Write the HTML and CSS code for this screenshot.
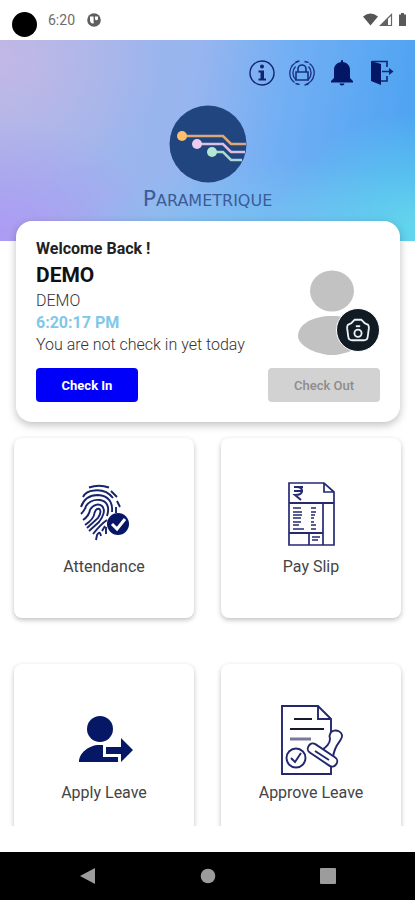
FILE: index.html
```html
<!DOCTYPE html>
<html lang="en">
<head>
<meta charset="utf-8">
<meta name="viewport" content="width=device-width, initial-scale=1">
<title>Parametrique</title>
<link rel="stylesheet" href="styles.css">
</head>
<body>
<div class="status">
  <span class="camera-hole"></span>
  <span class="clock">6:20</span>
  <svg class="status-app" width="14" height="14" viewBox="0 0 14 14"><circle cx="7" cy="7" r="6.8" fill="#5e5e5e"/><path d="M3 3.6h3.6v6.8H5.2A3 3 0 0 1 3 8z" fill="#fff"/><path d="M8 3.4h3v2.3a1.5 1.5 0 0 1-3 0z" fill="#fff"/></svg>
  <svg class="status-icons" width="46" height="14" viewBox="0 0 46 14"><path d="M2 3.500Q9.500-2.500 17 3.500L9.500 12.500Z" fill="#565656"/><path d="M19.500 12.500 30.500 1.500V12.500Z" fill="none" stroke="#666" stroke-width="1.200"/><path d="M19 13 27 5V13Z" fill="#626262"/><path d="M38 1.500h2V0h3v1.500h2V13h-7z" fill="#5a5a5a"/></svg>
</div>
<main class="content">
  <header class="hero">
    <nav class="tools" aria-label="Account">
      <button class="tool" aria-label="Information"><svg viewBox="0 0 26 26"><circle cx="13" cy="13" r="12" fill="none" stroke="#10246f" stroke-width="1.400"/><circle cx="13" cy="6.500" r="2" fill="#10246f"/><path d="M9.500 10.500h5.500v8h2v2h-7.500v-2h2v-6h-2z" fill="#10246f"/></svg></button>
      <button class="tool" aria-label="Change password"><svg viewBox="0 0 26 26" fill="none" stroke="#17317f" stroke-width="1.300"><path d="M9.500 1.500A12 12 0 0 0 5.500 22.500M10.500 24.500l-4-1M6.500 2l4-1M16.500 24.500A12 12 0 0 0 20.500 3.500M15.500 1.500l4 1M19.500 24l-4 1M6.500 6.500A9.500 9.500 0 0 0 7 20M19 20A9.500 9.500 0 0 0 19.500 6.500"/><path d="M7 12h12v8H7zM9 12V9a4 4 0 0 1 8 0v3" stroke-width="1.600"/></svg></button>
      <button class="tool" aria-label="Notifications"><svg viewBox="0 0 26 26" fill="#041767"><path d="M12 1a1 1 0 0 1 2 0v1c5 1 7 4 7 8v8l3 3v1.500H2V21l3-3v-8c0-4 2-7 7-8zM10.500 23.500h5a2.500 2 0 0 1-5 0z"/></svg></button>
      <button class="tool" aria-label="Log out"><svg viewBox="0 0 26 26"><path d="M2 1l10 3v21l-10-4z" fill="#041767"/><path d="M3 1.500h15V7M12 21h6v-5M13 11.500h10" fill="none" stroke="#10246f" stroke-width="1.600"/><path d="M20 8l4.500 3.500L20 15z" fill="#10246f"/></svg></button>
    </nav>
    <div class="brand">
      <svg class="brand-mark" viewBox="0 0 78 78"><circle cx="39" cy="39" r="38.500" fill="#20457f"/><g fill="none" stroke-width="2.500"><path d="M13 31H54l8 8h15" stroke="#dca77b"/><path d="M28 39H54l8 8h14" stroke="#d8bfe4"/><path d="M43 47H54l8 8h11" stroke="#add7d3"/></g><circle cx="13" cy="31" r="5" fill="#fac06d"/><circle cx="28" cy="39" r="5" fill="#ecccee"/><circle cx="43" cy="47" r="5" fill="#b5e6d3"/></svg>
      <h1 class="brand-name">P<span class="brand-rest">ARAMETRIQUE</span></h1>
    </div>
  </header>
  <section class="welcome">
    <div class="profile">
      <div class="greeting">
        <p class="hello">Welcome Back !</p>
        <h2 class="name">DEMO</h2>
        <p class="line">DEMO</p>
        <p class="line time">6:20:17 PM</p>
        <p class="line">You are not check in yet today</p>
      </div>
      <div class="avatar">
        <svg class="person" viewBox="0 0 68 86" fill="#c2c2c2"><ellipse cx="34" cy="21" rx="22" ry="20.500"/><path d="M0 66C0 54 15 46 34 46s34 8 34 20c0 11-21 19-34 19S0 77 0 66z"/></svg>
        <button class="photo" aria-label="Change photo"><svg viewBox="0 0 24 24" fill="none" stroke="#eef2f3" stroke-width="1.700"><path d="M2.500 7.500C3.500 6 5.500 6.500 6.500 5L9 2.500h6L17.500 5c1 1.500 3 1 4 2.500q.6 1 .5 3L21 18q-.3 3.500-3.500 3.500h-11Q3.300 21.500 3 18L2 10.500Q1.900 8.500 2.500 7.500z"/><circle cx="12" cy="15" r="3.300"/><path d="M10 8.500h4" /></svg></button>
      </div>
    </div>
    <div class="actions">
      <button class="check check-in">Check In</button>
      <button class="check check-out" disabled>Check Out</button>
    </div>
  </section>
  <div class="tiles">
    <a class="tile" href="#attendance">
      <svg class="tile-icon" viewBox="0 0 70 70" fill="none" stroke="#17236b" stroke-width="1.900">
        <path d="M20 8.500Q30 5 40 8.500M14 18Q17 12 25 11.500 37 10 44 19M42 12l6 6M48 22l3 6"/>
        <path d="M12 28C15 19 22 16 29 16 39 16.500 44 23 43 33"/>
        <path d="M12 35Q16 31 17 27C21 21 27 20.500 31 21 38 22 41 28 38 37M47 28v6"/>
        <path d="M14 41Q20 37 21 31C24 25 30 24.500 33 27 37 31 34 38 30 43L20 52"/>
        <path d="M16 46Q25 40 25.500 34 27 29 30.500 30 33 33 29 39L18 49"/>
        <path d="M38 41Q32 45 24 55M27 61l1-5q3-5 4 1M33 52l3-5M37 48v7"/>
        <circle cx="49" cy="45" r="11" fill="#071765" stroke="none"/><path d="M43 45l5 5 8-10" stroke="#fff" stroke-width="3"/>
      </svg>
      <span>Attendance</span>
    </a>
    <a class="tile" href="#payslip">
      <svg class="tile-icon" viewBox="0 0 70 70" fill="none" stroke="#252a71" stroke-width="1.700">
        <path d="M13 4H48l10 9V66H13zM48 4v9h10M13 24h45M47 24v42M13 54h34M33 54v12"/>
        <path d="M13 24h45M13 54h34" stroke-width="2.200"/>
        <path d="M18 8h9M18 12h9M21 8q5 0 5 4t-7 4l6 5" stroke-width="2"/>
        <path d="M17 29h8M17 33h9M17 36h9M17 39h8M17 43h8M17 46h6M17 50h11M35 29h5M35 33h5M35 36h4M35 39h3M35 43h3M35 46h5M35 50h5M36 58h8M36 61h6" stroke-width="1.700"/>
      </svg>
      <span>Pay Slip</span>
    </a>
    <a class="tile" href="#apply">
      <svg class="tile-icon" viewBox="0 0 70 70" fill="#061765"><circle cx="31" cy="24" r="13"/><path d="M10 57C10 48 20 40 30 40h4v12h15v5zM37 42h15v-9l12 12-12 12v-8H37z"/></svg>
      <span>Apply Leave</span>
    </a>
    <a class="tile" href="#approve">
      <svg class="tile-icon" viewBox="0 0 70 70" fill="none" stroke="#23276d" stroke-width="1.900">
        <path d="M55 27V14L42 1H6V69H55V62M42 1v13h13"/><path d="M18 14h18M14 24h34" stroke="#17192e"/><path d="M14 34h21" stroke="#77799c" stroke-width="3"/>
        <circle cx="20" cy="53" r="9.500"/><path d="M15 53l4 4 6-9"/>
        <path d="M45 46C50 42 54 39 54 34 51 24 64 23 66 30 67 36 59 37 57 52" fill="#fff"/>
        <rect x="30" y="45" width="33" height="10" rx="4.500" transform="rotate(34 46.500 50)" fill="#fff"/><path d="M39 46l14 9"/>
      </svg>
      <span>Approve Leave</span>
    </a>
  </div>
</main>
<nav class="system-nav" aria-label="System">
  <button class="system-key" aria-label="Back"><svg viewBox="0 0 18 18"><path d="M1 9 16 1V17z"/></svg></button>
  <button class="system-key" aria-label="Home"><svg viewBox="0 0 18 18"><circle cx="9" cy="9" r="7.300"/></svg></button>
  <button class="system-key" aria-label="Recent apps"><svg viewBox="0 0 18 18"><rect x="1" y="1" width="16" height="16" rx="1"/></svg></button>
</nav>
</body>
</html>
```
FILE: styles.css
```css
* { box-sizing: border-box; }
body {
  margin: 0;
  height: 100vh;
  display: flex;
  flex-direction: column;
  background: #fff;
  color: #333;
  font-family: Roboto, "Liberation Sans", sans-serif;
}
h1, h2, p { margin: 0; }
button { padding: 0; border: 0; background: none; font: inherit; }
svg { display: block; }

.status {
  flex: none;
  height: 40px;
  display: flex;
  align-items: center;
  padding: 0 8px 0 12px;
}
.camera-hole {
  width: 25px;
  height: 25px;
  margin: 8px 11px 0 0;
  border-radius: 50%;
  background: #000;
}
.clock { font-size: 14px; color: #6c6c6c; margin-right: 12px; }
.status-icons { margin-left: auto; }

.content {
  flex: 1;
  min-height: 0;
  overflow: hidden;
  margin-bottom: 26px;
}
.hero {
  height: 201px;
  padding: 20px 20px 0;
  background:
    radial-gradient(ellipse 150px 120px at 102% 95%, #63d9ec, rgba(99, 217, 236, 0) 100%),
    radial-gradient(ellipse 210px 90px at 65% 105%, #78c5f1, rgba(120, 197, 241, 0) 100%),
    radial-gradient(ellipse 160px 110px at 0% 95%, #ad9bf3, rgba(173, 155, 243, 0) 100%),
    radial-gradient(ellipse 160px 140px at 0% 10%, #c2b8e5, rgba(194, 184, 229, 0) 100%),
    linear-gradient(100deg, #a7b5ea 0%, #97b5ef 45%, #72aff4 65%, #48a1f2 100%);
}
.tools { display: flex; justify-content: flex-end; gap: 14px; }
.tool { width: 26px; height: 26px; }
.brand { display: flex; flex-direction: column; align-items: center; margin-top: 19px; }
.brand-mark { width: 78px; height: 78px; }
.brand-name {
  margin-top: 4px;
  font: 400 22px/24px "DejaVu Sans", sans-serif;
  color: #3c5c97;
}
.brand-rest { font-size: 16px; }

.welcome {
  position: relative;
  margin: -20px 15px 0 16px;
  padding: 17px 20px 20px;
  border-radius: 16px;
  background: #fff;
  box-shadow: 0 3px 8px rgba(0, 0, 0, 0.25);
}
.profile { display: flex; justify-content: space-between; }
.hello { font-size: 16px; line-height: 22px; font-weight: 700; color: #222; }
.name { font-size: 21px; line-height: 30px; font-weight: 700; color: #111; }
.line { font-size: 16px; line-height: 22px; font-weight: 300; }
.line.time { font-weight: 700; color: #80c7e8; }
.avatar { position: relative; width: 82px; padding-top: 32px; }
.person { width: 68px; height: 86px; }
.photo {
  position: absolute;
  right: 0;
  bottom: 4px;
  width: 44px;
  height: 44px;
  padding: 8px;
  border: 1px solid #fff;
  border-radius: 50%;
  background: #101b24;
}
.actions { display: flex; justify-content: space-between; margin-top: 12px; }
.check { height: 34px; border-radius: 4px; font-size: 13px; font-weight: 700; }
.check-in { width: 102px; background: #0000fa; color: #fff; }
.check-out { width: 112px; background: #d2d2d2; color: #8c8c8c; font-weight: 500; }

.tiles {
  display: grid;
  grid-template-columns: 1fr 1fr;
  gap: 46px 27px;
  padding: 16px 14px;
}
.tile {
  height: 180px;
  display: flex;
  flex-direction: column;
  align-items: center;
  padding-top: 41px;
  border-radius: 8px;
  background: #fff;
  box-shadow: 0 2px 5px rgba(0, 0, 0, 0.25);
  color: #444;
  font-size: 16px;
  line-height: 20px;
  text-decoration: none;
}
.tile-icon { width: 70px; height: 70px; margin-bottom: 8px; }

.system-nav {
  flex: none;
  height: 48px;
  display: flex;
  justify-content: center;
  align-items: center;
  gap: 102px;
  background: #000;
}
.system-key { width: 18px; height: 18px; fill: #9c9c9c; }
```
